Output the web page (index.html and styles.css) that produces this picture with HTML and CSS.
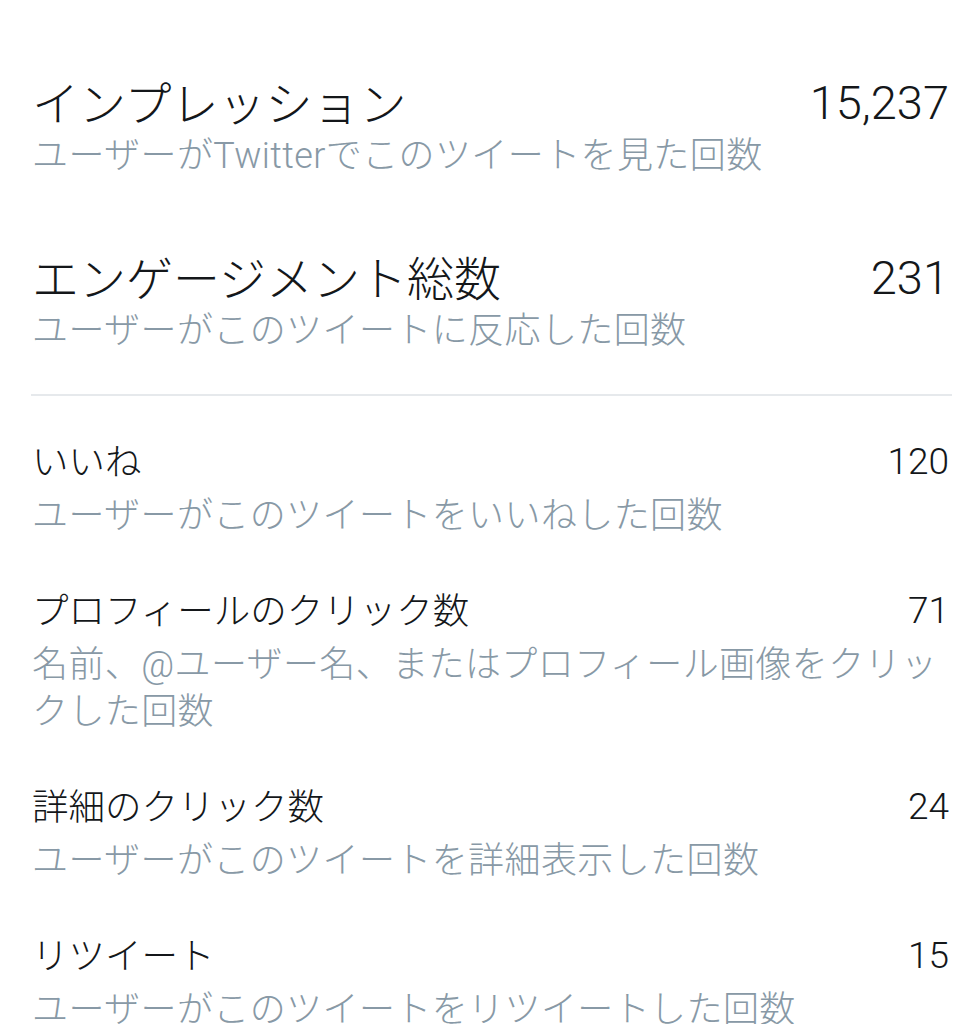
FILE: index.html
```html
<!DOCTYPE html>
<html lang="ja">
<head>
<meta charset="utf-8">
<title>ツイートアクティビティ</title>
<link rel="stylesheet" href="styles.css">
</head>
<body>
<main class="page">
  <section class="summary">
    <div class="metric metric-big">
      <div class="metric-head">
        <span class="metric-title">インプレッション</span>
        <span class="metric-value">15,237</span>
      </div>
      <p class="metric-desc">ユーザーがTwitterでこのツイートを見た回数</p>
    </div>
    <div class="metric metric-big">
      <div class="metric-head">
        <span class="metric-title">エンゲージメント総数</span>
        <span class="metric-value">231</span>
      </div>
      <p class="metric-desc">ユーザーがこのツイートに反応した回数</p>
    </div>
  </section>
  <hr class="divider">
  <section class="details">
    <div class="metric">
      <div class="metric-head">
        <span class="metric-title">いいね</span>
        <span class="metric-value">120</span>
      </div>
      <p class="metric-desc">ユーザーがこのツイートをいいねした回数</p>
    </div>
    <div class="metric">
      <div class="metric-head">
        <span class="metric-title">プロフィールのクリック数</span>
        <span class="metric-value">71</span>
      </div>
      <p class="metric-desc">名前、@ユーザー名、またはプロフィール画像をクリックした回数</p>
    </div>
    <div class="metric">
      <div class="metric-head">
        <span class="metric-title">詳細のクリック数</span>
        <span class="metric-value">24</span>
      </div>
      <p class="metric-desc">ユーザーがこのツイートを詳細表示した回数</p>
    </div>
    <div class="metric">
      <div class="metric-head">
        <span class="metric-title">リツイート</span>
        <span class="metric-value">15</span>
      </div>
      <p class="metric-desc">ユーザーがこのツイートをリツイートした回数</p>
    </div>
  </section>
</main>
</body>
</html>
```

FILE: styles.css
```css
html, body {
  margin: 0;
  padding: 0;
  background: #ffffff;
}

body {
  font-family: "Roboto", "Noto Sans CJK JP", sans-serif;
  color: #14171a;
}

.page {
  padding: 74px 28px 0 32px;
}

.summary {
  display: flex;
  flex-direction: column;
  gap: 69px;
}

.details {
  display: flex;
  flex-direction: column;
  gap: 43px;
  padding-top: 38px;
}

.metric {
  display: flex;
  flex-direction: column;
}

.metric-head {
  display: flex;
  justify-content: space-between;
  align-items: center;
  height: 52px;
}

.metric-title {
  font-family: "Noto Sans CJK JP", sans-serif;
  font-weight: 300;
  font-size: 36.5px;
  line-height: 52px;
  color: #14171a;
}

.metric-value {
  font-family: "Roboto", sans-serif;
  font-weight: 300;
  font-size: 37px;
  line-height: 52px;
  padding-top: 4px;
  color: #14171a;
}

.metric-big .metric-head {
  height: 53px;
}

.metric-big .metric-title {
  font-size: 47px;
  line-height: 53px;
}

.metric-big .metric-value {
  font-size: 47px;
  line-height: 53px;
}

.metric-desc {
  margin: 7px 0 0;
  font-family: "Roboto", "Noto Sans CJK JP", sans-serif;
  font-weight: 300;
  font-size: 36px;
  letter-spacing: 0.4px;
  line-height: 47px;
  color: #8899a6;
}

.metric-big .metric-desc {
  margin-top: 6px;
}

.divider {
  margin: 39px -3px 0 -1px;
  border: 0;
  height: 2px;
  background: #e6e9ec;
}
```
